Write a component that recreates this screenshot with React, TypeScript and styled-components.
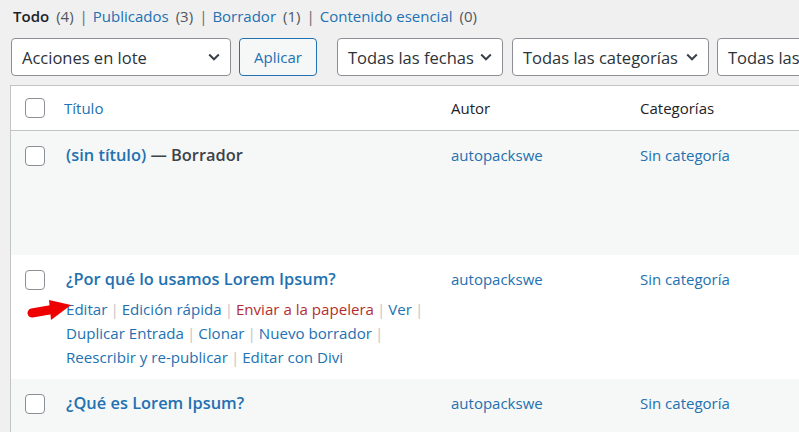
import React from 'react';
import styled, { createGlobalStyle } from 'styled-components';

const GlobalStyle = createGlobalStyle`
  html, body {
    margin: 0;
    padding: 0;
    background: #f0f0f1;
    overflow: hidden;
  }
  body {
    width: 799px;
    height: 432px;
    font-family: "Open Sans", "Noto Sans", sans-serif;
    color: #2c3338;
  }
`;

const Page = styled.div`
  padding-left: 10px;
  width: 1000px;
`;

const StatusList = styled.ul`
  list-style: none;
  margin: 4px 0 0;
  padding: 0 0 0 3px;
  display: flex;
  align-items: center;
  height: 24px;
  font-size: 15px;
  line-height: 24px;
`;

const StatusItem = styled.li`
  display: flex;
  align-items: center;
  gap: 7px;
  white-space: nowrap;
`;

const StatusLink = styled.span<{ $current?: boolean }>`
  color: ${(p) => (p.$current ? '#1d2327' : '#2271b1')};
  font-weight: ${(p) => (p.$current ? 600 : 400)};
`;

const Count = styled.span`
  color: #50575e;
`;

const StatusSep = styled.span`
  color: #646970;
  margin: 0 5px 0 6px;
`;

const Toolbar = styled.div`
  display: flex;
  align-items: center;
  margin: 10px 0 0 1px;
  height: 38px;
`;

const SelectBox = styled.div<{ $width: number; $gap: number }>`
  box-sizing: border-box;
  flex: none;
  width: ${(p) => p.$width}px;
  height: 38px;
  margin-left: ${(p) => p.$gap}px;
  display: flex;
  align-items: center;
  justify-content: space-between;
  padding: 0 10px 0 10px;
  background: #fff;
  border: 1px solid #8c8f94;
  border-radius: 4px;
  font-size: 16.5px;
  color: #2c3338;
  white-space: nowrap;
  overflow: hidden;
`;

const ApplyButton = styled.div<{ $gap: number }>`
  box-sizing: border-box;
  flex: none;
  width: 78px;
  height: 38px;
  margin-left: ${(p) => p.$gap}px;
  display: flex;
  align-items: center;
  justify-content: center;
  background: #f6f7f7;
  border: 1px solid #2271b1;
  border-radius: 4px;
  color: #2271b1;
  font-size: 15px;
`;

const Table = styled.div`
  margin-top: 9px;
  width: 990px;
  background: #fff;
  border: 1px solid #c3c4c7;
`;

const columns = '43px 387px 189px 1fr';

const HeadRow = styled.div`
  display: grid;
  grid-template-columns: ${columns};
  height: 44px;
  align-items: center;
  border-bottom: 1px solid #c3c4c7;
  font-size: 15px;
`;

const HeadCell = styled.div<{ $link?: boolean }>`
  padding-left: 10px;
  color: ${(p) => (p.$link ? '#2271b1' : '#1d2327')};
`;

const CheckCell = styled.div<{ $top?: number }>`
  padding-left: 14px;
  padding-top: ${(p) => p.$top ?? 0}px;
  display: flex;
`;

const Checkbox = styled.span`
  box-sizing: border-box;
  display: block;
  width: 20px;
  height: 20px;
  background: #fff;
  border: 1px solid #8c8f94;
  border-radius: 4px;
`;

const Row = styled.div<{ $alt?: boolean }>`
  position: relative;
  display: grid;
  grid-template-columns: ${columns};
  align-items: start;
  background: ${(p) => (p.$alt ? '#f6f7f7' : '#fff')};
  padding-bottom: 10px;
`;

const Cell = styled.div<{ $indent?: number }>`
  padding: 12px 10px 0 ${(p) => p.$indent ?? 10}px;
  font-size: 15px;
  line-height: 24px;
  color: #2271b1;
  white-space: nowrap;
`;

const RowTitle = styled.div`
  font-size: 16.4px;
  font-weight: 600;
  line-height: 24px;
  color: #2271b1;
`;

const PostState = styled.span`
  color: #3c434a;
`;

const Actions = styled.div<{ $visible?: boolean }>`
  margin-top: 6px;
  visibility: ${(p) => (p.$visible ? 'visible' : 'hidden')};
  font-size: 15.1px;
  line-height: 24px;
`;

const ActionLine = styled.div`
  display: flex;
  white-space: nowrap;
`;

const Action = styled.span<{ $danger?: boolean }>`
  color: ${(p) => (p.$danger ? '#b32d2e' : '#2271b1')};
`;

const ActionSep = styled.span`
  color: #c3c4c7;
  margin: 0 3px;
`;

const Annotation = styled.svg`
  position: absolute;
  left: 16px;
  top: 43px;
`;

const Chevron = () => (
  <svg width="12" height="8" viewBox="0 0 12 8" style={{ flex: 'none' }}>
    <polyline points="1.2,1.5 6,6.3 10.8,1.5" fill="none" stroke="#3c434a" strokeWidth="2" />
  </svg>
);

const statuses = [
  { label: 'Todo', count: 4, current: true },
  { label: 'Publicados', count: 3 },
  { label: 'Borrador', count: 1 },
  { label: 'Contenido esencial', count: 0 },
];

type ActionItem = { label: string; danger?: boolean };
const actionLines: ActionItem[][] = [
  [{ label: 'Editar' }, { label: 'Edición rápida' }, { label: 'Enviar a la papelera', danger: true }, { label: 'Ver' }],
  [{ label: 'Duplicar Entrada' }, { label: 'Clonar' }, { label: 'Nuevo borrador' }],
  [{ label: 'Reescribir y re-publicar' }, { label: 'Editar con Divi' }],
];

const RowActions = ({ visible }: { visible?: boolean }) => (
  <Actions $visible={visible}>
    {actionLines.map((line, li) => (
      <ActionLine key={li}>
        {line.map((a, i) => (
          <React.Fragment key={a.label}>
            <Action $danger={a.danger}>{a.label}</Action>
            {(i < line.length - 1 || li < actionLines.length - 1) && <ActionSep>|</ActionSep>}
          </React.Fragment>
        ))}
      </ActionLine>
    ))}
  </Actions>
);

const posts = [
  { title: '(sin título)', state: 'Borrador', showActions: false },
  { title: '¿Por qué lo usamos Lorem Ipsum?', showActions: true, arrow: true },
  { title: '¿Qué es Lorem Ipsum?', showActions: false },
];

export default function App() {
  return (
    <>
      <GlobalStyle />
      <Page>
        <StatusList>
          {statuses.map((s, i) => (
            <React.Fragment key={s.label}>
              {i > 0 && <StatusSep>|</StatusSep>}
              <StatusItem>
                <StatusLink $current={s.current}>{s.label}</StatusLink>
                <Count>({s.count})</Count>
              </StatusItem>
            </React.Fragment>
          ))}
        </StatusList>

        <Toolbar>
          <SelectBox $width={220} $gap={0}>
            Acciones en lote
            <Chevron />
          </SelectBox>
          <ApplyButton $gap={8}>Aplicar</ApplyButton>
          <SelectBox $width={166} $gap={20}>
            Todas las fechas
            <Chevron />
          </SelectBox>
          <SelectBox $width={197} $gap={9}>
            Todas las categorías
            <Chevron />
          </SelectBox>
          <SelectBox $width={190} $gap={8}>
            Todas las etiquetas
            <Chevron />
          </SelectBox>
        </Toolbar>

        <Table>
          <HeadRow>
            <CheckCell>
              <Checkbox />
            </CheckCell>
            <HeadCell $link>Título</HeadCell>
            <HeadCell>Autor</HeadCell>
            <HeadCell>Categorías</HeadCell>
          </HeadRow>
          {posts.map((p, i) => (
            <Row key={p.title} $alt={i % 2 === 0}>
              <CheckCell $top={15}>
                <Checkbox />
              </CheckCell>
              <Cell $indent={12}>
                <RowTitle>
                  {p.title}
                  {p.state && <PostState> — {p.state}</PostState>}
                </RowTitle>
                <RowActions visible={p.showActions} />
              </Cell>
              <Cell>autopackswe</Cell>
              <Cell>Sin categoría</Cell>
              {p.arrow && (
                <Annotation width="46" height="26" viewBox="0 0 46 26">
                  <line x1="5" y1="15" x2="28" y2="11" stroke="#ee0000" strokeWidth="9" strokeLinecap="round" />
                  <polygon points="22,2 44,7 24,22" fill="#ee0000" />
                </Annotation>
              )}
            </Row>
          ))}
        </Table>
      </Page>
    </>
  );
}
